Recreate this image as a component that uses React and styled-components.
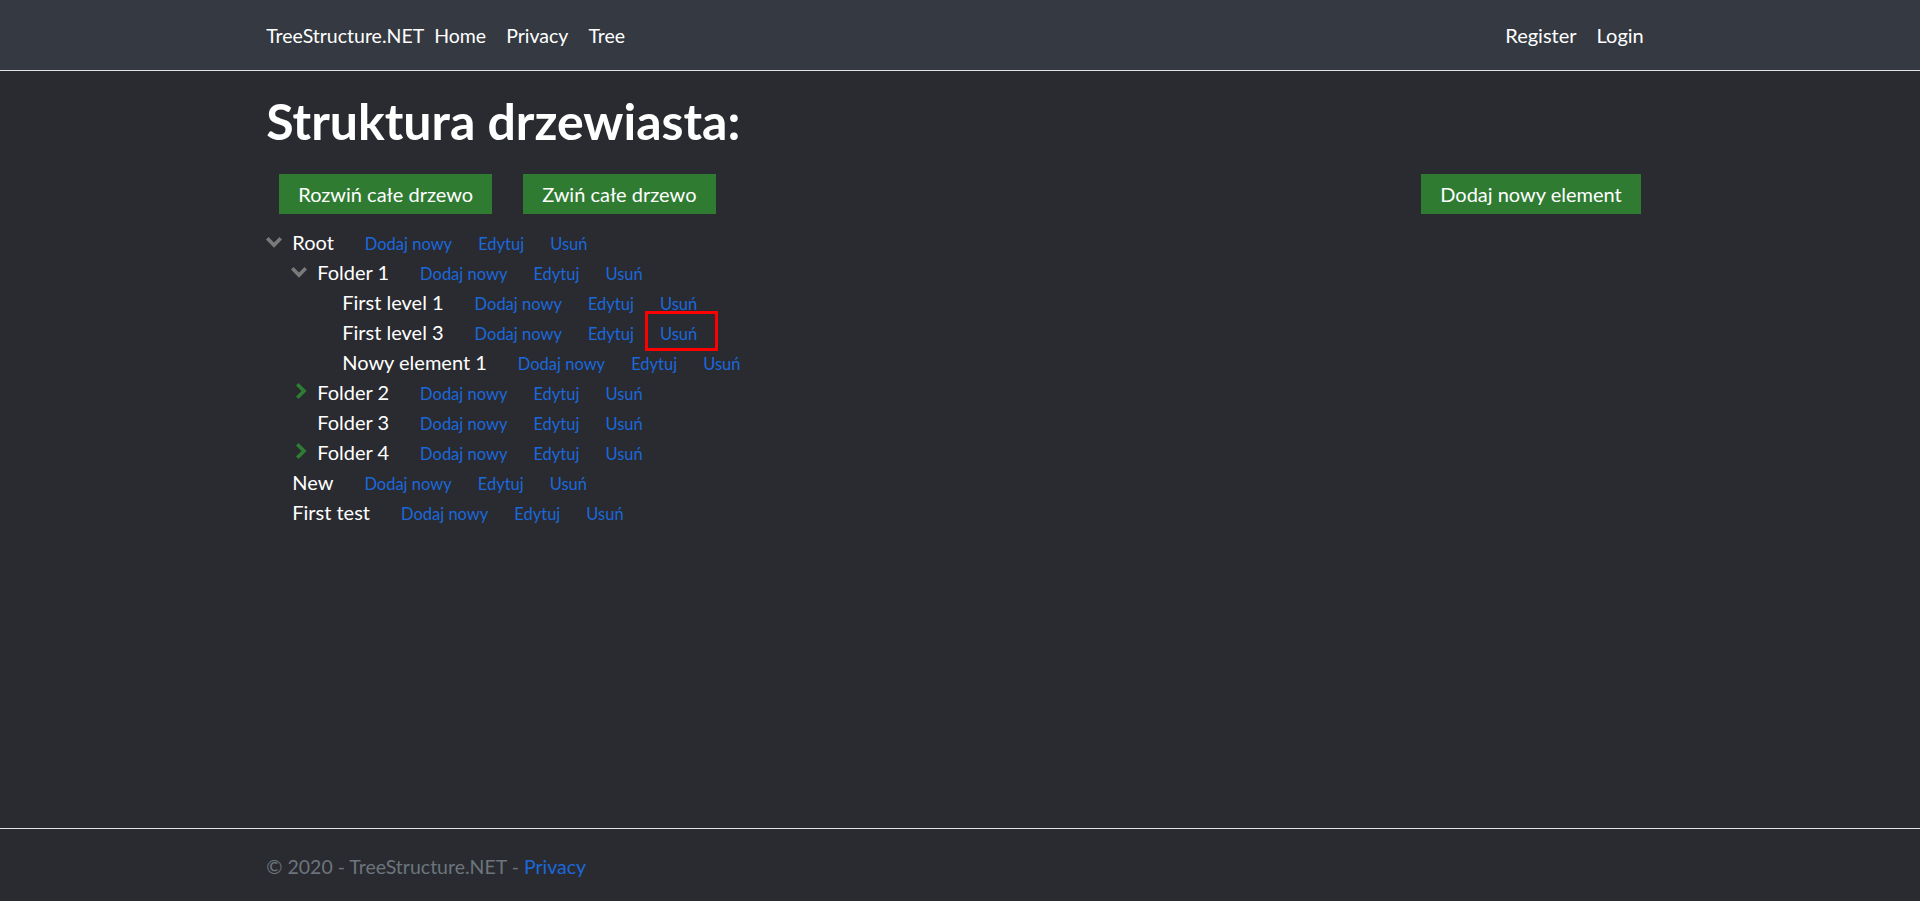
import React from "react";
import styled, { createGlobalStyle, css } from "styled-components";

const GlobalStyle = createGlobalStyle`
  html, body {
    margin: 0;
    padding: 0;
  }
  body {
    background: #2a2b30;
    color: #fff;
    font-family: Lato, "Open Sans", sans-serif;
    font-size: 20px;
  }
`;

const Page = styled.div`
  min-height: 100vh;
  display: flex;
  flex-direction: column;
`;

const Container = styled.div`
  box-sizing: border-box;
  width: 100%;
  max-width: 1425px;
  margin: 0 auto;
  padding: 0 18.75px;
`;

const Header = styled.header`
  background: #353a42;
  height: 70px;
  border-bottom: 1px solid #e4e4e4;
`;

const NavInner = styled(Container)`
  display: flex;
  align-items: center;
  height: 100%;
  font-size: 19.5px;
`;

const Brand = styled.a`
  color: #fff;
  text-decoration: none;
`;

const NavGroup = styled.nav`
  display: flex;
  margin-left: ${(p) => (p.$right ? "auto" : "0")};
  font-size: ${(p) => (p.$right ? "20px" : "inherit")};
`;

const NavLink = styled.a`
  color: #fff;
  text-decoration: none;
  padding: 0 10px;
`;

const Main = styled(Container)`
  flex: 1;
  padding-bottom: 20px;
`;

const Title = styled.h1`
  font-size: 50px;
  font-weight: 700;
  line-height: 1.2;
  margin: 20px 0 23px;
`;

const Toolbar = styled.div`
  display: flex;
  gap: 31px;
  padding: 0 13px;
`;

const Button = styled.button`
  height: 40px;
  padding: 0 19px;
  border: none;
  border-radius: 0;
  background: #2e7b31;
  color: #fff;
  font-family: inherit;
  font-size: 20px;
  cursor: pointer;
  margin-left: ${(p) => (p.$push ? "auto" : "0")};
`;

const TreeList = styled.ul`
  list-style: none;
  margin: ${(p) => (p.$root ? "13px 0 0" : "0")};
  padding: 0 0 0 ${(p) => (p.$root ? "0" : "25px")};
`;

const Row = styled.div`
  line-height: 30px;
  height: 30px;
  white-space: nowrap;
`;

const Toggle = styled.span`
  display: inline-flex;
  align-items: center;
  vertical-align: top;
  width: 26px;
  height: 30px;
`;

const Name = styled.span`
  color: #fff;
  font-size: 20px;
  margin-right: 5px;
`;

const TreeLink = styled.a`
  position: relative;
  display: inline-block;
  line-height: 1.2;
  color: #1a68dc;
  font-size: 16.5px;
  text-decoration: none;
  margin-left: 26px;

  ${(p) =>
    p.$marked &&
    css`
      &::after {
        content: "";
        position: absolute;
        top: -14px;
        bottom: -6px;
        left: -15px;
        right: -21px;
        border: 3px solid #f00;
      }
    `}
`;

const Footer = styled.footer`
  box-sizing: border-box;
  border-top: 1px solid #e4e4e4;
  height: 73px;
  padding-top: 3px;
  line-height: 69px;
  color: #6c757d;
  font-size: 19.5px;
  white-space: nowrap;
`;

const FooterLink = styled.a`
  color: #1a68dc;
  text-decoration: none;
`;

const Chevron = ({ open }) =>
  open ? (
    <svg width="16" height="18" viewBox="0 0 16 18">
      <polygon
        points="0,6.5 2.5,4 8,9.5 13.5,4 16,6.5 8,14.8"
        fill="#7a7a7a"
      />
    </svg>
  ) : (
    <svg width="16" height="18" viewBox="0 0 16 18">
      <polygon
        points="5,2.5 7.5,0 15.6,8 7.5,16 5,13.5 10.5,8"
        fill="#2e7d32"
      />
    </svg>
  );

const tree = [
  {
    name: "Root",
    open: true,
    children: [
      {
        name: "Folder 1",
        open: true,
        children: [
          { name: "First level 1" },
          { name: "First level 3", marked: true },
          { name: "Nowy element 1" },
        ],
      },
      { name: "Folder 2", open: false, children: [] },
      { name: "Folder 3" },
      { name: "Folder 4", open: false, children: [] },
    ],
  },
  { name: "New" },
  { name: "First test" },
];

const TreeNode = ({ node }) => {
  const hasKids = Array.isArray(node.children);
  return (
    <li>
      <Row>
        <Toggle>{hasKids && <Chevron open={node.open} />}</Toggle>
        <Name>{node.name}</Name>
        <TreeLink href="#">Dodaj nowy</TreeLink>
        <TreeLink href="#">Edytuj</TreeLink>
        <TreeLink href="#" $marked={node.marked}>
          Usuń
        </TreeLink>
      </Row>
      {hasKids && node.open && (
        <TreeList>
          {node.children.map((c) => (
            <TreeNode key={c.name} node={c} />
          ))}
        </TreeList>
      )}
    </li>
  );
};

const App = () => {
  return (
    <Page>
      <GlobalStyle />
      <Header>
        <NavInner>
          <Brand href="#">TreeStructure.NET</Brand>
          <NavGroup>
            <NavLink href="#">Home</NavLink>
            <NavLink href="#">Privacy</NavLink>
            <NavLink href="#">Tree</NavLink>
          </NavGroup>
          <NavGroup $right>
            <NavLink href="#">Register</NavLink>
            <NavLink href="#">Login</NavLink>
          </NavGroup>
        </NavInner>
      </Header>

      <Main>
        <Title>Struktura drzewiasta:</Title>
        <Toolbar>
          <Button>Rozwiń całe drzewo</Button>
          <Button>Zwiń całe drzewo</Button>
          <Button $push>Dodaj nowy element</Button>
        </Toolbar>
        <TreeList $root>
          {tree.map((n) => (
            <TreeNode key={n.name} node={n} />
          ))}
        </TreeList>
      </Main>

      <Footer>
        <Container>
          © 2020 - TreeStructure.NET - <FooterLink href="#">Privacy</FooterLink>
        </Container>
      </Footer>
    </Page>
  );
};

export default App;
